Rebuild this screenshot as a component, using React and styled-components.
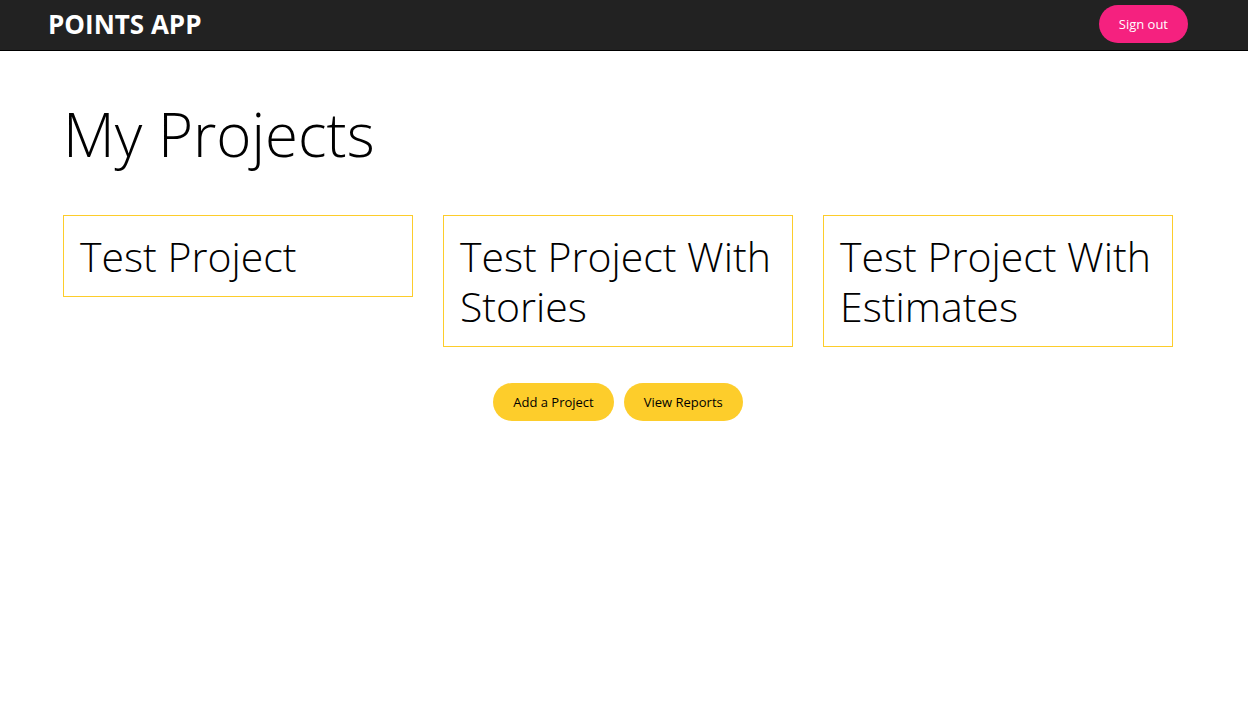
import React from 'react';
import styled, { createGlobalStyle } from 'styled-components';

const GlobalStyle = createGlobalStyle`
  body {
    margin: 0;
    font-family: "Open Sans", "Liberation Sans", sans-serif;
    background: #fff;
    color: #000;
  }
`;

const Header = styled.header`
  height: 51px;
  box-sizing: border-box;
  background-color: #222;
  border-bottom: 1px solid #000;
  display: flex;
  align-items: center;
  justify-content: space-between;
  padding: 0 60px 2px 48px;
`;

const Logo = styled.div`
  color: #fff;
  font-weight: 700;
  font-size: 26px;
`;

const Button = styled.button`
  height: 38px;
  padding: 0 20px;
  border: none;
  border-radius: 19px;
  font-family: inherit;
  font-size: 13px;
  cursor: pointer;
  background-color: ${p => (p.$pink ? '#f5217f' : '#fdcd2b')};
  color: ${p => (p.$pink ? '#fff' : '#000')};
`;

const Main = styled.main`
  padding: 0 75px 0 63px;
`;

const Title = styled.h1`
  margin: 39px 0 0;
  font-weight: 300;
  font-size: 60px;
  line-height: 88px;
`;

const Grid = styled.div`
  display: grid;
  grid-template-columns: repeat(3, 350px);
  gap: 30px;
  align-items: start;
  margin-top: 37px;
`;

const Card = styled.div`
  border: 1px solid #fdcd2b;
  padding: 15px 15px 15px 16px;
  font-weight: 300;
  font-size: 41px;
  line-height: 50px;
`;

const Actions = styled.div`
  display: flex;
  justify-content: center;
  gap: 10px;
  margin-top: 36px;
`;

const projects = ['Test Project', 'Test Project With Stories', 'Test Project With Estimates'];

const App = () => {
  return (
    <>
      <GlobalStyle />
      <Header>
        <Logo>POINTS APP</Logo>
        <Button $pink>Sign out</Button>
      </Header>
      <Main>
        <Title>My Projects</Title>
        <Grid>
          {projects.map(name => (
            <Card key={name}>{name}</Card>
          ))}
        </Grid>
        <Actions>
          <Button>Add a Project</Button>
          <Button>View Reports</Button>
        </Actions>
      </Main>
    </>
  );
};

export default App;
